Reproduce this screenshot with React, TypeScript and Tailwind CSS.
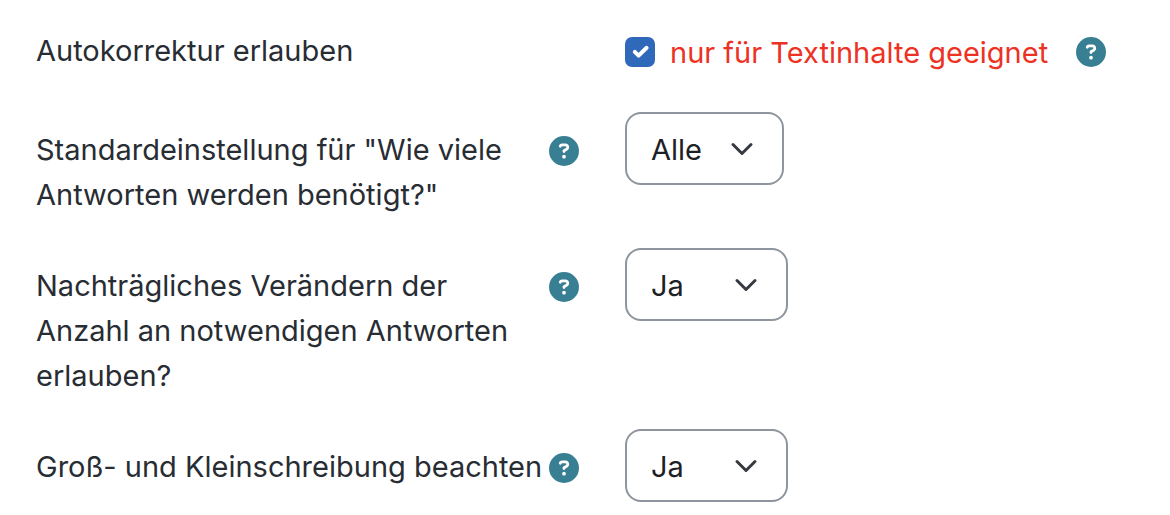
import React from 'react'

interface SelectFieldProps {
    id: string
    options: string[]
    className: string
}

const HelpIcon: React.FC<{ topic: string }> = ({ topic }) => (
    <button type="button" aria-label={`Hilfe: ${topic}`} className="shrink-0">
        <svg viewBox="0 0 512 512" className="block size-[30px]" aria-hidden="true">
            <circle cx="256" cy="256" r="256" fill="#387f93" />
            <path
                fill="#fff"
                d="M169.8 165.3c7.9-22.3 29.1-37.3 52.8-37.3h58.3c34.9 0 63.1 28.3 63.1 63.1 0 22.6-12.1 43.5-31.7 54.8L280 264.4c-.2 13-10.9 23.6-24 23.6-13.3 0-24-10.7-24-24v-13.5c0-8.6 4.6-16.5 12.1-20.8l44.3-25.4c4.7-2.7 7.6-7.7 7.6-13.1 0-8.4-6.8-15.1-15.1-15.1h-58.3c-3.4 0-6.4 2.1-7.5 5.3l-.4 1.2c-4.4 12.5-18.2 19-30.6 14.6s-19-18.2-14.6-30.6l.3-1.3zM224 352a32 32 0 1 1 64 0 32 32 0 1 1-64 0z"
            />
        </svg>
    </button>
)

const SelectField: React.FC<SelectFieldProps> = ({ id, options, className }) => (
    <div className={`relative ${className}`}>
        <select
            id={id}
            className="block h-[73px] w-full appearance-none rounded-2xl border-2 border-[#8f959e] bg-white px-6 pt-px text-[#1d2125]"
        >
            {options.map((option) => (
                <option key={option}>{option}</option>
            ))}
        </select>
        <svg
            viewBox="0 0 16 16"
            className="pointer-events-none absolute right-[30px] top-1/2 size-6 -translate-y-1/2"
            fill="none"
            stroke="#343a40"
            strokeWidth="2"
            strokeLinecap="round"
            strokeLinejoin="round"
            aria-hidden="true"
        >
            <path d="m2 5 6 6 6-6" />
        </svg>
    </div>
)

const rows = [
    {
        id: 'required-answers',
        label: 'Standardeinstellung für "Wie viele Antworten werden benötigt?"',
        options: ['Alle', 'Eine'],
        width: 'w-[159px]',
    },
    {
        id: 'change-required',
        label: 'Nachträgliches Verändern der Anzahl an notwendigen Antworten erlauben?',
        options: ['Ja', 'Nein'],
        width: 'w-[163px]',
    },
    {
        id: 'case-sensitive',
        label: 'Groß- und Kleinschreibung beachten',
        options: ['Ja', 'Nein'],
        width: 'w-[163px]',
    },
]

const App: React.FC = () => (
    <form className="flex flex-col gap-[31px] bg-white pt-7 pl-9 pr-6 font-['Inter',sans-serif] text-[29px] leading-[45px] text-[#282c33]">
        <div className="flex items-start pb-1.5">
            <span className="w-[589px] shrink-0">Autokorrektur erlauben</span>
            <div className="flex items-center">
                <span className="relative mr-[15px] size-[30px] shrink-0">
                    <input
                        id="autocorrect"
                        type="checkbox"
                        defaultChecked
                        className="peer block size-[30px] appearance-none rounded-[7px] border-2 border-[#8f959e] checked:border-[#3069ba] checked:bg-[#3069ba]"
                    />
                    <svg
                        viewBox="0 0 30 30"
                        className="pointer-events-none absolute inset-0 hidden size-[30px] peer-checked:block"
                        fill="none"
                        stroke="#fff"
                        strokeWidth="4"
                        strokeLinecap="round"
                        strokeLinejoin="round"
                        aria-hidden="true"
                    >
                        <path d="m9.8 14.8 3.8 3.8 8-7.8" />
                    </svg>
                </span>
                <label htmlFor="autocorrect" className="mr-7 pt-0.5 text-[#ed3224]">
                    nur für Textinhalte geeignet
                </label>
                <HelpIcon topic="Autokorrektur erlauben" />
            </div>
        </div>
        {rows.map((row) => (
            <div key={row.id} className="flex items-start">
                <div className="mr-[46px] flex w-[543px] shrink-0 items-start justify-between pt-[15px]">
                    <label htmlFor={row.id} className="max-w-[512px]">
                        {row.label}
                    </label>
                    <span className="flex h-[47px] items-center">
                        <HelpIcon topic={row.label} />
                    </span>
                </div>
                <SelectField id={row.id} options={row.options} className={row.width} />
            </div>
        ))}
    </form>
)

export default App
